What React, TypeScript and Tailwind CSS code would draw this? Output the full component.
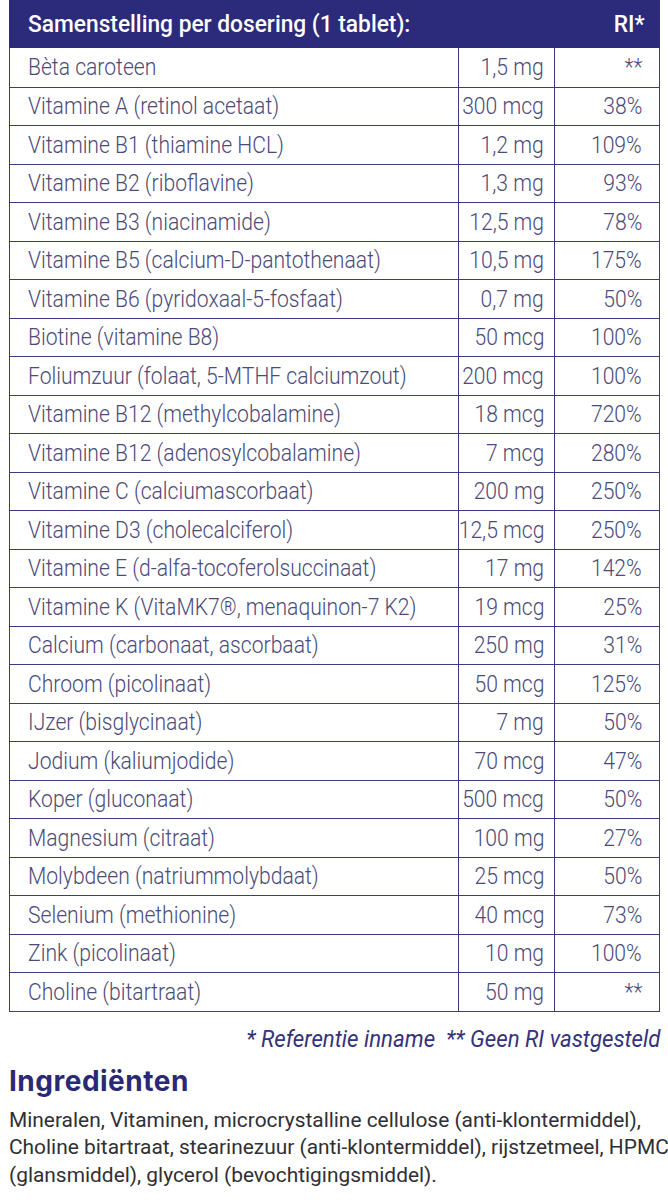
import React from "react";

const rows: [string, string, string][] = [
  ["Bèta caroteen", "1,5 mg", "**"],
  ["Vitamine A (retinol acetaat)", "300 mcg", "38%"],
  ["Vitamine B1 (thiamine HCL)", "1,2 mg", "109%"],
  ["Vitamine B2 (riboflavine)", "1,3 mg", "93%"],
  ["Vitamine B3 (niacinamide)", "12,5 mg", "78%"],
  ["Vitamine B5 (calcium-D-pantothenaat)", "10,5 mg", "175%"],
  ["Vitamine B6 (pyridoxaal-5-fosfaat)", "0,7 mg", "50%"],
  ["Biotine (vitamine B8)", "50 mcg", "100%"],
  ["Foliumzuur (folaat, 5-MTHF calciumzout)", "200 mcg", "100%"],
  ["Vitamine B12 (methylcobalamine)", "18 mcg", "720%"],
  ["Vitamine B12 (adenosylcobalamine)", "7 mcg", "280%"],
  ["Vitamine C (calciumascorbaat)", "200 mg", "250%"],
  ["Vitamine D3 (cholecalciferol)", "12,5 mcg", "250%"],
  ["Vitamine E (d-alfa-tocoferolsuccinaat)", "17 mg", "142%"],
  ["Vitamine K (VitaMK7®, menaquinon-7 K2)", "19 mcg", "25%"],
  ["Calcium (carbonaat, ascorbaat)", "250 mg", "31%"],
  ["Chroom (picolinaat)", "50 mcg", "125%"],
  ["IJzer (bisglycinaat)", "7 mg", "50%"],
  ["Jodium (kaliumjodide)", "70 mcg", "47%"],
  ["Koper (gluconaat)", "500 mcg", "50%"],
  ["Magnesium (citraat)", "100 mg", "27%"],
  ["Molybdeen (natriummolybdaat)", "25 mcg", "50%"],
  ["Selenium (methionine)", "40 mcg", "73%"],
  ["Zink (picolinaat)", "10 mg", "100%"],
  ["Choline (bitartraat)", "50 mg", "**"],
];

const roboto = "font-['Roboto',sans-serif]";

function L({ children, className = "" }: { children: React.ReactNode; className?: string }) {
  return <span className={`inline-block origin-left whitespace-nowrap ${className}`}>{children}</span>;
}
function R({ children, className = "" }: { children: React.ReactNode; className?: string }) {
  return <span className={`inline-block origin-right whitespace-nowrap ${className}`}>{children}</span>;
}

export default function App() {
  return (
    <div className={`w-[668px] overflow-hidden bg-white ${roboto}`}>
      <div className="mx-[9px] w-[651px]">
        <div className="flex h-[48px] items-center justify-between bg-[#2c2a7a] pl-[19px] pr-[15px] text-[24px] font-medium leading-none text-white">
          <L className="scale-x-[0.947]">Samenstelling per dosering (1 tablet):</L>
          <R className="scale-x-[0.947]">RI*</R>
        </div>
        <div className="border-x border-b border-[#3d3b80]">
          {rows.map(([n, v, r], i) => (
            <div
              key={i}
              className={`grid h-[38.5px] grid-cols-[448px_96px_1fr] text-[24px] font-light leading-none text-[#4b4a78] ${i > 0 ? "border-t border-[#3d3b80]" : ""}`}
            >
              <div className="flex items-center pl-[18px]">
                <L className="scale-x-[0.88]">{n}</L>
              </div>
              <div className="flex items-center justify-end border-l border-[#3d3b80] pr-[10px]">
                <R className="scale-x-[0.88]">{v}</R>
              </div>
              <div className="flex items-center justify-end border-l border-[#3d3b80] pr-[17px]">
                <R className="scale-x-[0.88]">{r}</R>
              </div>
            </div>
          ))}
        </div>
      </div>
      <div className="mt-[14px] flex h-[28px] items-center justify-end pr-[8px] text-[23px] italic leading-none text-[#34327a]">
        <R className="scale-x-[0.967]">* Referentie inname&nbsp;&nbsp;** Geen RI vastgesteld</R>
      </div>
      <div className="mt-[12px] pl-[9px] font-['Inter',sans-serif] text-[28px] font-bold leading-[30px] tracking-[0.5px] text-[#2b2973]">
        Ingrediënten
      </div>
      <div className="mt-[11px] flex flex-col pl-[9px] text-[21px] leading-[27.5px] text-[#2f2f35]">
        <L className="scale-x-[0.995]">Mineralen, Vitaminen, microcrystalline cellulose (anti-klontermiddel),</L>
        <L className="scale-x-[0.995]">Choline bitartraat, stearinezuur (anti-klontermiddel), rijstzetmeel, HPMC</L>
        <L className="scale-x-[0.995]">(glansmiddel), glycerol (bevochtigingsmiddel).</L>
      </div>
    </div>
  );
}
